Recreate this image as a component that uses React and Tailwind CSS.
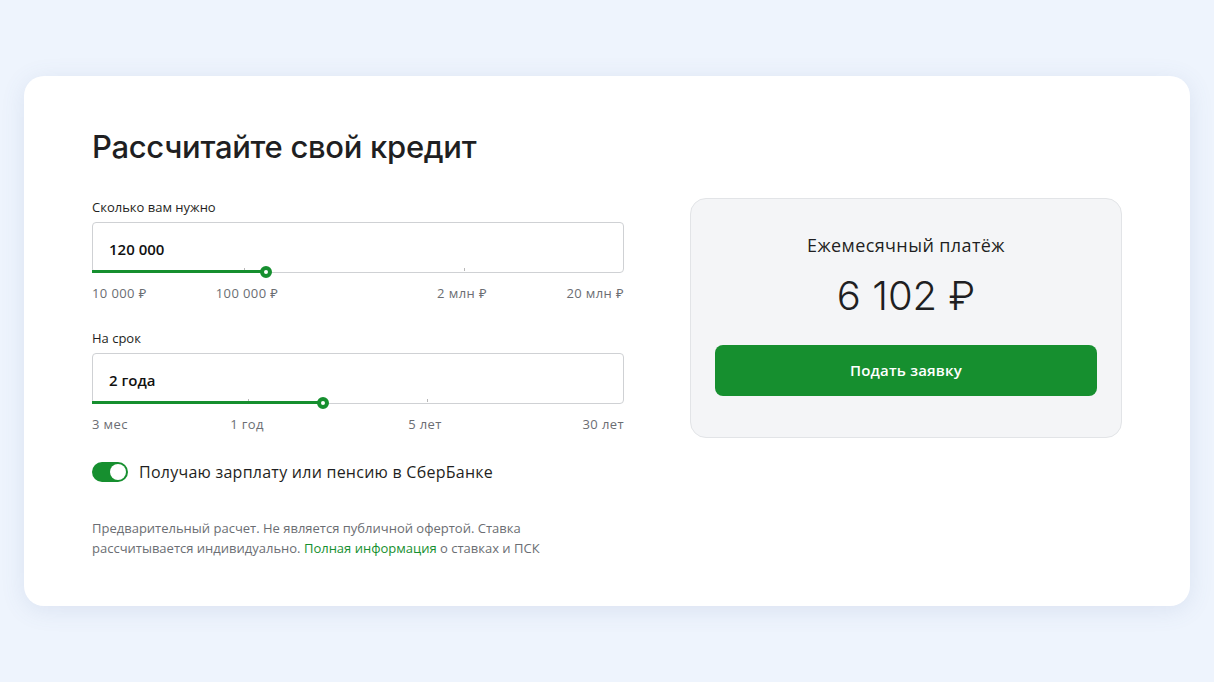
import React from 'react';

const body = { fontFamily: '"Open Sans", "Noto Sans", sans-serif' };
const display = { fontFamily: 'Inter, "Noto Sans", sans-serif' };

/**
 * Range field: value box with a slider line on its bottom border
 * and a scale of marks under it.
 */
const RangeField = ({ label, value, fillClass, thumbClass, ticks, marks }) => (
  <div>
    <div className="text-[13px] leading-[18px] font-medium text-[#1f1f22] mb-[6px]">{label}</div>
    <div className="relative h-[51px] border border-[#cfd1d4] rounded-[4px] bg-white flex items-center pl-4">
      <span className="text-[15px] font-semibold text-[#111] mt-[3px]">{value}</span>
      {ticks.map((t) => (
        <span key={t} className={`absolute bottom-[1px] w-px h-[3px] bg-[#b8b8b8] ${t}`} />
      ))}
      <div className={`absolute -left-px -bottom-px h-[3px] bg-[#168f2f] ${fillClass}`} />
      <div className={`absolute -bottom-[6px] w-3 h-3 -ml-[6px] rounded-full bg-white border-[4px] border-[#168f2f] ${thumbClass}`} />
    </div>
    <div className="relative h-4 mt-3 text-[13px] leading-4 tracking-[0.4px] text-[#6b6e73]">
      {marks.map((m) => (
        <span key={m.text} className={`absolute top-0 whitespace-nowrap ${m.pos}`}>{m.text}</span>
      ))}
    </div>
  </div>
);

export default function App() {
  return (
    <div className="min-h-[682px] bg-[#eef4fd] px-6 pt-[76px] pb-[76px]" style={body}>
      <div className="bg-white rounded-[20px] shadow-[0_4px_24px_rgba(80,110,160,0.12)] px-[68px] pt-[51px] pb-[48px]">
        <h1 className="text-[31px] leading-[40px] font-medium text-[#1f1f22] tracking-[-0.3px]" style={display}>
          Рассчитайте свой кредит
        </h1>

        <div className="flex gap-[66px] mt-[31px]">
          <div className="w-[532px] shrink-0">
            <RangeField
              label="Сколько вам нужно"
              value="120 000"
              fillClass="w-[174px]"
              thumbClass="left-[173px]"
              ticks={['left-[151px]', 'left-[371px]']}
              marks={[
                { text: '10 000 ₽', pos: 'left-0' },
                { text: '100 000 ₽', pos: 'left-[155px] -translate-x-1/2' },
                { text: '2 млн ₽', pos: 'left-[370px] -translate-x-1/2' },
                { text: '20 млн ₽', pos: 'right-0' },
              ]}
            />

            <div className="mt-7">
              <RangeField
                label="На срок"
                value="2 года"
                fillClass="w-[231px]"
                thumbClass="left-[230px]"
                ticks={['left-[155px]', 'left-[334px]']}
                marks={[
                  { text: '3 мес', pos: 'left-0' },
                  { text: '1 год', pos: 'left-[155px] -translate-x-1/2' },
                  { text: '5 лет', pos: 'left-[333px] -translate-x-1/2' },
                  { text: '30 лет', pos: 'right-0' },
                ]}
              />
            </div>

            <label className="flex items-center gap-[11px] mt-[30px]">
              <span className="w-9 h-5 rounded-full bg-[#168f2f] flex items-center justify-end p-[2px]">
                <span className="w-4 h-4 rounded-full bg-white" />
              </span>
              <span className="text-[16px] leading-5 tracking-[0.25px] text-[#1f1f22]">
                Получаю зарплату или пенсию в СберБанке
              </span>
            </label>

            <div className="mt-9 text-[13px] leading-5 text-[#6b6e73]">
              <p>Предварительный расчет. Не является публичной офертой. Ставка</p>
              <p>
                рассчитывается индивидуально. <a className="text-[#168f2f]">Полная информация</a> о ставках и ПСК
              </p>
            </div>
          </div>

          <div className="w-[432px] h-[240px] shrink-0 bg-[#f4f5f7] border border-[#e2e4e7] rounded-[16px] px-6 pt-[34px] flex flex-col items-center">
            <div className="text-[18px] leading-6 tracking-[0.4px] text-[#1f1f22]">Ежемесячный платёж</div>
            <div className="mt-[15px] text-[40px] leading-[48px] font-light text-[#1f1f22]" style={display}>6 102 ₽</div>
            <button className="mt-[25px] w-full h-[51px] rounded-[8px] bg-[#168f2f] text-white text-[15px] font-semibold tracking-[0.2px]">
              Подать заявку
            </button>
          </div>
        </div>
      </div>
    </div>
  );
}
